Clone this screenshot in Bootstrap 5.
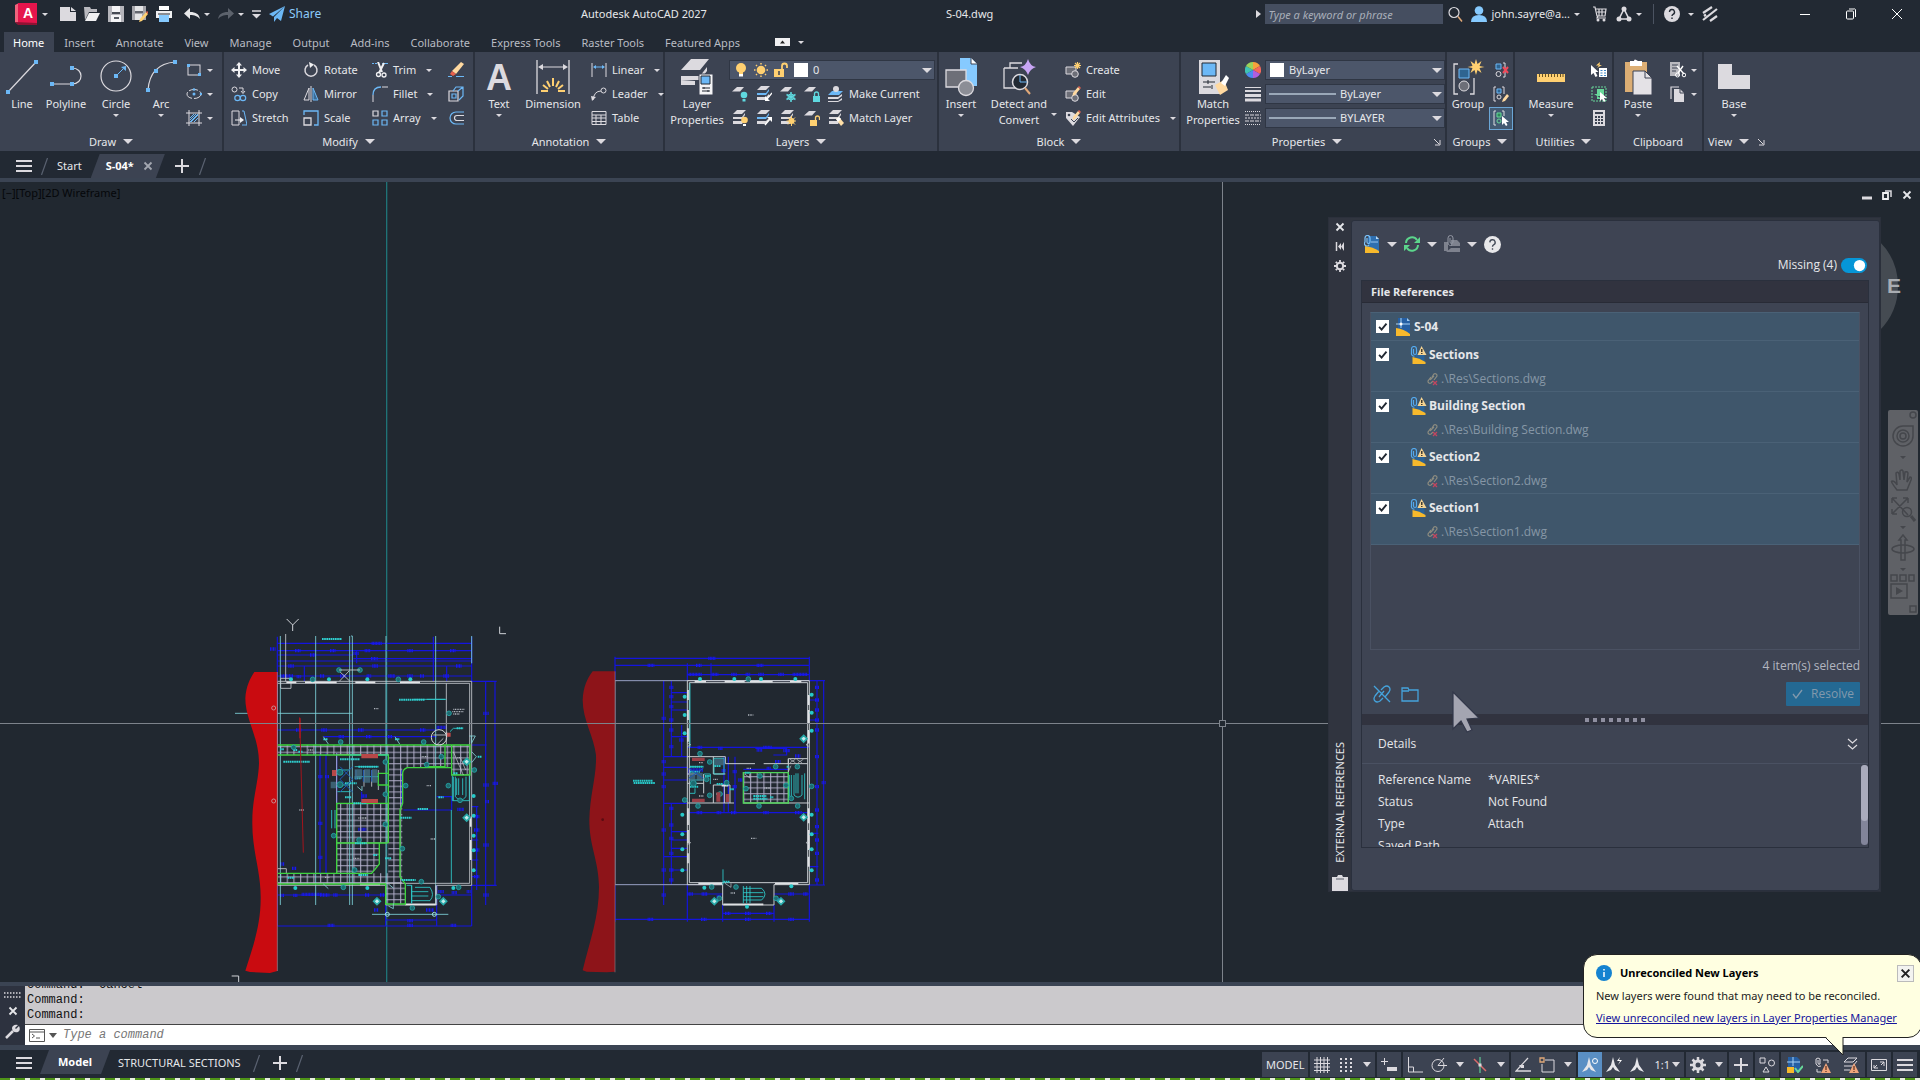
<!DOCTYPE html>
<html lang="en">
<head>
<meta charset="utf-8">
<meta name="viewport" content="width=device-width, initial-scale=1">
<title>Autodesk AutoCAD 2027 - S-04.dwg</title>
<link href="https://cdn.jsdelivr.net/npm/bootstrap@5.3.0/dist/css/bootstrap.min.css" rel="stylesheet">
<style>
:root{--dark:#222933;--panel:#3c4352;--edge:#2b313d;--field:#4c566a;--lite:#dcdadf;--blue:#6cb8f6;--gold:#ffd071;--teal:#5fd9e0}
body{font-family:"Noto Sans","Open Sans",sans-serif;font-size:11px;line-height:16px;color:#e6e7ea;background:var(--dark)}
button{background:none;border:0;padding:0;color:inherit;font:inherit;white-space:nowrap}
select,input{font:inherit;color:inherit}
svg{display:block;flex:none}
.i16{width:16px;height:16px}
.car,.bigcar{display:inline-block;flex:none;border:3px solid transparent;border-top-color:#dcdadf;border-bottom:0}
.bigcar{border-width:5px;border-bottom:0}
/* title bar */
.ttl{height:32px;padding:0 0 4px 13px;position:relative}
.quick{width:568px;gap:8px;flex:none}
.share{color:#8ccbfa;font-size:12px}
.prog{width:365px}
.srch{width:178px;height:20px;background:#454e60;border:0;border-radius:0;padding:0 3px;font-style:italic}
.srch::placeholder{color:#a9aeb9;opacity:1}
.winb{width:46px}
.wgap{width:56px}
/* ribbon */
.rtabs{height:20px;padding-left:4px}
.rtabs a{display:block;height:20px;padding:0 11px 0 10px;line-height:21px;color:#b9bcc3;text-decoration:none}
.rtabs a.active{background:var(--panel);color:#fff;padding:0 10px 0 9px}
.ribbon{background:var(--panel);height:99px}
.rpan{border-right:2px solid var(--edge);display:flex;flex-direction:column;flex:none}
.rbody{height:80px;padding-top:6px;display:flex}
.rfoot{height:19px;line-height:19px;display:flex;align-items:center;justify-content:center;gap:7px}
.rbig{display:flex;flex-direction:column;align-items:center;text-align:center;flex:none}
.rbig .pic{height:38px;display:flex;align-items:center}
.rbig .pic svg{overflow:visible}
.rbig .car{margin-top:2px}
.rgrid{display:grid;grid-auto-rows:24px;align-items:center;justify-items:start}
.rgrid button{display:flex;align-items:center;gap:5px;height:24px}
.rgrid .car{margin-left:5px}
.p-draw{width:224px}.p-mod{width:251px}.p-ann{width:190px}.p-lay{width:274px}.p-blk{width:242px}.p-prop{width:266px}.p-grp{width:68px}.p-utl{width:99px}.p-clip{width:90px}
.c-mod{grid-template-columns:72px 69px 76px 20px;padding-left:7px}
.c-lay{grid-template-columns:24px 24px 24px 24px 100px;padding-left:3px}
.c-prop{grid-template-columns:20px 180px}
.w42{width:42px}.w44{width:44px}.w48{width:48px}.w60{width:60px}.w64{width:64px}.w72{width:72px}
.fld{height:20px;background:var(--field);border:1px solid #2f3644;display:flex;align-items:center;margin:2px 0;padding:0 2px 0 3px;gap:4px;width:100%}
.w206{width:206px}
.fld select{appearance:none;background:none;border:0;padding:0;flex:1;min-width:0;height:18px;line-height:16px;outline:0}
.fld .rule{width:67px;height:2px;background:#9aa8b8;flex:none}
.rgrid .gsel{width:24px;height:23px;justify-content:center;background:#435a72;border:1px solid #6ba6d6}
/* file and layout tabs */
.ftabs{height:27px;padding:3px 0 0 16px;gap:9px}
.tabsel{height:24px;background:var(--panel);color:#fff;font-weight:700;clip-path:polygon(9px 0,100% 0,calc(100% - 9px) 100%,0 100%);display:flex;align-items:center;gap:9px;padding:0 12px 0 15px}
.tabmodel{padding:0 18px}
.strip{height:4px;background:#3b4453}
.strip2{height:5px}
.slash{width:7px;height:17px;color:#596170}
/* drawing window */
.view{position:relative;flex:1;min-height:0;background:#212830;overflow:hidden}
.model{position:absolute;inset:0;width:100%;height:100%}
.vlabel{position:absolute;left:2px;top:3px;color:#05070a}
.vwin{position:absolute;right:8px;top:8px;gap:10px}
.navb{position:absolute;right:2px;top:228px;width:30px;height:205px;background:#5f6166;border-radius:2px}
/* reference palette */
.pal{position:absolute;right:39px;top:35px;width:553px;background:#30353f;border:1px solid #2b303b;font-family:"Open Sans","Noto Sans",sans-serif;font-size:12px}
.palside{width:22px;padding:4px 0 0;background:#30343f;display:flex;flex-direction:column;align-items:center}
.palmain{background:#3e4453;border:1px solid #2a303d;border-radius:3px;padding:14px 10px 42px 9px;flex:1;margin-top:2px;min-width:0}
.ptools,.ptools button{display:flex;align-items:center;gap:7px}
.ptools{padding-left:3px}
.frame{border:1px solid #2a303d;margin-top:7px}
.frhead{height:22px;background:#31333f;border-bottom:1px solid #282b36;line-height:21px;padding-left:9px;font-weight:700;font-size:11px}
.rlist{margin:9px 8px 0;height:338px;border:1px solid #4a5162;border-top:1px solid #4a6176}
.rrow{background:#3f566b;border-bottom:1px solid #4a6176;padding:0 5px}
.rrow label{height:27px;display:flex;align-items:center;gap:2px;font-weight:700}
.rrow .pth{height:23px;display:flex;align-items:center;padding:0 0 2px 50px;gap:3px;color:#8696a6}
.rrow input{appearance:none;width:13px;height:13px;margin:0 5px 0 0;border:1px solid #fff;border-radius:0;background:#fff url("data:image/svg+xml,%3Csvg xmlns='http://www.w3.org/2000/svg' viewBox='0 0 12 12'%3E%3Cpath d='M2.5 6.2l2.4 2.5 4.7-5.6' fill='none' stroke='%23222933' stroke-width='1.8'/%3E%3C/svg%3E") center/12px no-repeat}
.sub input{margin-right:19px}
.missw{gap:4px}
.form-switch.missw{padding:0 2px 0 0;min-height:0;margin:4px 0 0}
.form-switch .form-check-input.miss{width:26px;height:15px;margin:0;border:0}
.form-check-input.miss:checked{background-color:#0696d7}
.selcount{color:#b3b6c0}
.linkb{gap:10px;padding-left:11px}
.resolve{width:74px;height:24px;background:#246993;color:#8299ac;border-radius:1px}
.split{height:11px;background:#31333f;display:flex;justify-content:center;align-items:center;gap:4px}
.split i{width:4px;height:4px;background:#8f8fa0}
.dhead{height:39px;padding:0 10px 0 16px;border-bottom:1px solid #4a5162}
.det{height:83px;overflow:hidden;padding:5px 0 0 16px;position:relative}
.det dl{display:grid;grid-template-columns:110px 1fr;grid-auto-rows:22px;margin:0;line-height:22px}
.det dt{font-weight:400}.det dd{margin:0}
.bar{position:absolute;right:0;top:1px;width:7px;height:80px;border-radius:4px;background:#82859a}
.bar i{display:block;height:56px;border-radius:4px;background:#a9abbc}
.vert{writing-mode:vertical-rl;transform:rotate(180deg);font:11px/14px "Noto Sans",sans-serif}
.ptr{position:absolute;right:439px;top:509px}
/* command window */
.cmd{background:#2d323f;font-family:"Liberation Mono",monospace;font-size:12px}
.cside{width:25px;padding:6px 0 6px}
.hist{height:39px;background:#cbc9cc;color:#111;line-height:15px;padding:0 2px 1px;overflow:hidden;display:flex;flex-direction:column;justify-content:flex-end;border-bottom:1px solid #444}
.cline{height:20px;background:#fff;color:#444;padding-left:4px;gap:2px}
.cline input{flex:1;border:0;background:none;font-style:italic;padding:0 0 0 4px;outline:0}
.cline input::placeholder{color:#777;opacity:1}
/* status bar */
.foot{height:28px;position:relative}
.ltabs{padding-left:16px;height:26px;gap:8px}
.stat{gap:2px;padding:2px 3px 0 0}
.stat .bigcar{border-width:5px 4px 0}
.sg{height:25px;background:var(--panel);display:flex;align-items:center;gap:8px;padding:0 4px}
.sg.wide{gap:12px;padding:0 6px}
.sg button{display:flex;align-items:center;height:25px;gap:9px}
.sg .on{background:#5a8fc4;padding:0 4px;margin:0 -4px}
.sg .tight{gap:2px}
.dash{height:2px;background:repeating-linear-gradient(90deg,#4f9418 0 10px,#e8efe0 10px 15px)}
.tip{position:absolute;right:-2px;bottom:40px;width:339px;height:84px;background:#ffffe1;border:1px solid #222;border-radius:14px;color:#222;padding:8px 7px 0 12px;z-index:5}
.tip h2{font-size:11px;font-weight:700;line-height:20px;margin:0;color:#000;flex:1}
.tip p{margin:5px 0 6px;line-height:16px}
.tip a{color:#14149c}
.tipx{width:17px;height:17px;background:#f3f3f0;border:1px solid #bbb;display:flex;align-items:center;justify-content:center}
.tail{position:absolute;left:240px;top:81px}
.glyph{font-family:"Liberation Sans",sans-serif;font-weight:700}
</style>
<script src="https://cdn.jsdelivr.net/npm/bootstrap@5.3.0/dist/js/bootstrap.bundle.min.js"></script>
</head>
<body>
<svg width="0" height="0" class="position-absolute" aria-hidden="true">
<defs>
<symbol id="burger" viewBox="0 0 16 14"><path d="M0 2h16M0 7h16M0 12h16" stroke="#dcdadf" stroke-width="2"/></symbol>
<symbol id="plus" viewBox="0 0 16 16"><path d="M8 1v14M1 8h14" stroke="#dcdadf" stroke-width="2"/></symbol>
<symbol id="ex" viewBox="0 0 10 10"><path d="M1.500 1.500l7 7M8.500 1.500l-7 7" stroke="currentColor" stroke-width="1.800"/></symbol>
<symbol id="sl" viewBox="0 0 7 17"><path d="M6.500 0L.5 17" stroke="currentColor" stroke-width="1.200"/></symbol>
<symbol id="rect" viewBox="0 0 16 16"><rect x="2" y="3" width="12" height="10" fill="none" stroke="#dcdadf"/><path d="M1 2h3v3H1zM12 11h3v3h-3z" fill="#6cb8f6"/></symbol>
<symbol id="elli" viewBox="0 0 16 16"><ellipse cx="8" cy="8" rx="7" ry="4.500" fill="none" stroke="#dcdadf" stroke-dasharray="9 2"/><circle cx="8" cy="8" r="1.500" fill="#6cb8f6"/><circle cx="15" cy="8" r="1.300" fill="#6cb8f6"/><circle cx="8" cy="3.500" r="1.300" fill="#6cb8f6"/></symbol>
<symbol id="hatch" viewBox="0 0 16 16"><path d="M3 0v16M13 0v16M0 3h16M0 13h16" stroke="#dcdadf"/><path d="M4 8l4-4M4 12l8-8M8 12l4-4M5 12l7-7M4 10l6-6" stroke="#6cb8f6"/></symbol>
<symbol id="move" viewBox="0 0 16 16"><path d="M8 0l3 3.500H9V7h3.500V5L16 8l-3.500 3V9H9v3.500h2L8 16l-3-3.500h2V9H3.500v2L0 8l3.500-3v2H7V3.500H5z" fill="#f0f0f2"/></symbol>
<symbol id="rotate" viewBox="0 0 16 16"><path d="M5 3a6 6 0 1 0 6 0" fill="none" stroke="#dcdadf" stroke-width="1.500"/><path d="M6 0l5 2.500L7 6z" fill="#f0f0f2"/></symbol>
<symbol id="copy" viewBox="0 0 16 16"><circle cx="3.500" cy="3.500" r="2.500" fill="none" stroke="#dcdadf"/><circle cx="6.500" cy="12" r="2.700" fill="none" stroke="#6cb8f6" stroke-width="1.200"/><circle cx="12" cy="12" r="2.700" fill="none" stroke="#6cb8f6" stroke-width="1.200"/><path d="M8 2h4v4M10 5l2 2.500L14 5" fill="none" stroke="#dcdadf"/></symbol>
<symbol id="mirror" viewBox="0 0 16 16"><path d="M6 2v12H1zM8 0v16" fill="none" stroke="#dcdadf"/><path d="M10 2v12h5z" fill="#3b6a94" stroke="#6cb8f6"/></symbol>
<symbol id="stretch" viewBox="0 0 16 16"><path d="M1 1h7v14H1z" fill="none" stroke="#dcdadf"/><path d="M11 1h2l3 14h-5" fill="none" stroke="#6cb8f6"/><path d="M4 10h6" stroke="#f0f0f2"/><path d="M9 7l4 3-4 3z" fill="#f0f0f2"/></symbol>
<symbol id="scale" viewBox="0 0 16 16"><path d="M1 5V1h14v14h-4" fill="none" stroke="#6cb8f6" stroke-width="1.300"/><path d="M1 8h7v7H1z" fill="none" stroke="#dcdadf" stroke-width="1.300"/></symbol>
<symbol id="trim" viewBox="0 0 16 16"><path d="M0 1.500h7" stroke="#6cb8f6" stroke-dasharray="2 1"/><path d="M10 1.500h6" stroke="#6cb8f6"/><path d="M6 0l4 10M12 1L7 11" stroke="#f0f0f2" stroke-width="2"/><circle cx="6.500" cy="12.500" r="2" fill="none" stroke="#f0f0f2" stroke-width="1.300"/><circle cx="12" cy="13" r="2" fill="none" stroke="#f0f0f2" stroke-width="1.300"/></symbol>
<symbol id="fillet" viewBox="0 0 16 16"><path d="M1 16V9" stroke="#dcdadf"/><path d="M1 9q0-8 8-8" fill="none" stroke="#6cb8f6" stroke-width="1.300"/><path d="M10 1h6" stroke="#dcdadf"/></symbol>
<symbol id="array" viewBox="0 0 16 16"><path d="M1 1h5v5H1z" fill="none" stroke="#dcdadf" stroke-width="1.200"/><path d="M10 1h5v5h-5zM1 10h5v5H1zM10 10h5v5h-5z" fill="none" stroke="#6cb8f6" stroke-width="1.200"/></symbol>
<symbol id="erase" viewBox="0 0 16 16"><path d="M13 0l3 2-8 10-4-3z" fill="#ffd9a0"/><path d="M4 9l4 3-3 2-3-2z" fill="#e8604c"/><path d="M0 14.500h4M8 14.500h8" stroke="#6cb8f6"/></symbol>
<symbol id="cube" viewBox="0 0 16 16"><path d="M1 5h9v10H1z" fill="none" stroke="#dcdadf" stroke-width="1.200"/><path d="M5 5l3-4h7v9l-4 4M10 5l5-4M4 8h4v4H4z" fill="none" stroke="#6cb8f6" stroke-width="1.200"/></symbol>
<symbol id="offset" viewBox="0 0 16 16"><path d="M16 2H8a6 6 0 0 0 0 12h8" fill="none" stroke="#6cb8f6" stroke-width="1.200"/><path d="M16 5.500H9a2.500 2.500 0 0 0 0 5h7" fill="none" stroke="#dcdadf" stroke-width="1.200"/></symbol>
<symbol id="lin" viewBox="0 0 16 16"><path d="M1 1v14M15 1v14" stroke="#dcdadf"/><path d="M3 5h10" stroke="#6cb8f6"/><path d="M2 5l3-2v4zM14 5l-3-2v4z" fill="#6cb8f6"/></symbol>
<symbol id="leader" viewBox="0 0 16 16"><path d="M2 14q1-9 8-9" fill="none" stroke="#dcdadf"/><circle cx="12.500" cy="4.500" r="2.500" fill="none" stroke="#dcdadf"/><path d="M0 10l5 1-4 4z" fill="#dcdadf"/></symbol>
<symbol id="table" viewBox="0 0 16 16"><path d="M1 1.500h14v13H1zM1 5h14M1 8h14M1 11.500h14M5 5v9M10 5v9" fill="none" stroke="#dcdadf"/></symbol>
<symbol id="bulb" viewBox="0 0 16 16"><circle cx="8" cy="6" r="5" fill="#ffd071"/><path d="M6 10h4v2H6z" fill="#ffd071"/><path d="M6 12h4v2.500H6z" fill="#fff"/></symbol>
<symbol id="sun" viewBox="0 0 16 16"><circle cx="8" cy="8" r="4.300" fill="#ffd071"/><path d="M8 1v1.500M8 13.500V15M1 8h1.500M13.500 8H15M3 3l1 1M12 12l1 1M13 3l-1 1M3 13l1-1" stroke="#ffd071" stroke-width="1.500"/></symbol>
<symbol id="unlock" viewBox="0 0 16 16"><path d="M1 7h10v8H1z" fill="#ffd071"/><path d="M9 8V4a2.500 2.500 0 0 1 5 0v2" fill="none" stroke="#ffd071" stroke-width="1.800"/><path d="M6 9v4" stroke="#3c4352" stroke-width="1.500"/></symbol>
<symbol id="sheet" viewBox="0 0 16 16"><path d="M5 1h7L8 5.500H0z" fill="#dcdadf"/></symbol>
<symbol id="sheets" viewBox="0 0 16 16"><path d="M5 0h9l-4 4H1z" fill="#dcdadf"/><path d="M1 7h9l3-4v2l-3 4H1zM1 11h9l3-3v2l-3 4H1z" fill="#dcdadf"/></symbol>
<symbol id="bsheets" viewBox="0 0 16 16"><path d="M5 0h9l-4 4H1z" fill="#dcdadf"/><path d="M1 7h9l3-4v2l-3 4H1z" fill="#6cb8f6"/><path d="M1 11h9l3-3v2l-3 4H1z" fill="#dcdadf"/></symbol>
<symbol id="l1" viewBox="0 0 16 16"><use href="#sheet"/><circle cx="12" cy="9" r="3.300" fill="#5fd9e0"/><path d="M10.500 13h3v2.500h-3z" fill="#5fd9e0"/></symbol>
<symbol id="l2" viewBox="0 0 16 16"><use href="#bsheets"/><path d="M16 7l-5 6" stroke="#fff" stroke-width="1.300"/><path d="M9 10v5h5z" fill="#fff"/></symbol>
<symbol id="l3" viewBox="0 0 16 16"><use href="#sheet"/><path d="M11 6v10M6.500 8.500l9 5M15.500 8.500l-9 5" stroke="#5fd9e0" stroke-width="1.500"/><circle cx="11" cy="11" r="3" fill="none" stroke="#5fd9e0"/></symbol>
<symbol id="l4" viewBox="0 0 16 16"><use href="#sheet"/><path d="M9 10h7v6H9z" fill="#5fd9e0"/><path d="M10.500 10V8a2 2 0 0 1 4 0v2" fill="none" stroke="#5fd9e0" stroke-width="1.300"/></symbol>
<symbol id="l5" viewBox="0 0 16 16"><path d="M4 5h11l-4 4H0z" fill="#6cb8f6"/><path d="M0 11h10l4-3v2l-4 3H0zM0 15h10l4-3v2l-4 2H0z" fill="#dcdadf"/><circle cx="8" cy="3" r="3" fill="#dcdadf"/></symbol>
<symbol id="m1" viewBox="0 0 16 16"><use href="#sheets"/><circle cx="12.500" cy="10" r="3.300" fill="#ffd071"/><path d="M11 14h3v2h-3z" fill="#fff"/></symbol>
<symbol id="m2" viewBox="0 0 16 16"><use href="#bsheets"/><path d="M9 15l5-6" stroke="#fff" stroke-width="1.300"/><path d="M11 7h5v5z" fill="#fff"/></symbol>
<symbol id="m3" viewBox="0 0 16 16"><use href="#sheets"/><circle cx="11.500" cy="11" r="3" fill="#ffd071"/><path d="M11.500 6v10M6.500 11h10M8 7.500l7 7M15 7.500l-7 7" stroke="#ffd071"/></symbol>
<symbol id="m4" viewBox="0 0 16 16"><use href="#sheet"/><path d="M6 10h7v6H6z" fill="#ffd071"/><path d="M11.500 10V8a2 2 0 0 1 4 0v2" fill="none" stroke="#ffd071" stroke-width="1.300"/></symbol>
<symbol id="m5" viewBox="0 0 16 16"><use href="#sheets"/><path d="M8 9l3-2 5 6-3 3z" fill="#ffe0a8"/><path d="M8 9l3-2 2 2-3 3z" fill="#fff"/></symbol>
<symbol id="blk" viewBox="0 0 16 16"><path d="M1 5h10v7H1z" fill="#6d6f78" stroke="#dcdadf"/><circle cx="10" cy="12" r="3.300" fill="#6d6f78" stroke="#dcdadf"/></symbol>
<symbol id="b1" viewBox="0 0 16 16"><use href="#blk"/><path d="M12.500 0v7M9 3.500h7M10 1l5 5M15 1l-5 5" stroke="#ffd071" stroke-width="1.200"/></symbol>
<symbol id="b2" viewBox="0 0 16 16"><use href="#blk"/><path d="M13 1l2 2-5 6-2.500 1 .5-3z" fill="#ffd9a0"/><path d="M13 1l1-1 2 2-1 1z" fill="#e8604c"/></symbol>
<symbol id="b3" viewBox="0 0 16 16"><path d="M1 2h6l8 5-7 9-7-8z" fill="#dcdadf"/><circle cx="4" cy="5" r="1.300" fill="#3c4352"/><path d="M6 9l3 3 4-4" stroke="#3c4352" fill="none"/><path d="M13 1l2 2-5 6-2.500 1 .5-3z" fill="#ffd9a0"/><path d="M13 1l1-1 2 2-1 1z" fill="#e8604c"/></symbol>
<symbol id="wheel" viewBox="0 0 16 16"><path d="M8 8V0a8 8 0 0 1 7 4z" fill="#f7a13c"/><path d="M8 8l7-4a8 8 0 0 1 0 8z" fill="#f2685c"/><path d="M8 8l7 4a8 8 0 0 1-7 4z" fill="#b05ee0"/><path d="M8 8v8a8 8 0 0 1-7-4z" fill="#4b8bf0"/><path d="M8 8l-7 4a8 8 0 0 1 0-8z" fill="#3fc3b4"/><path d="M8 8L1 4a8 8 0 0 1 7-4z" fill="#9bd35a"/></symbol>
<symbol id="lw" viewBox="0 0 16 16"><path d="M0 1.500h16" stroke="#dcdadf"/><path d="M0 5h16" stroke="#dcdadf" stroke-width="2"/><path d="M0 9.500h16M0 14h16" stroke="#dcdadf" stroke-width="3"/></symbol>
<symbol id="lt" viewBox="0 0 16 16"><path d="M0 1.500h16M0 14.500h16" stroke="#dcdadf" stroke-dasharray="1 1"/><path d="M0 5h16M0 11h16" stroke="#dcdadf" stroke-dasharray="4 1"/><path d="M0 8h16" stroke="#dcdadf" stroke-dasharray="2 1"/></symbol>
<symbol id="arrow" viewBox="0 0 16 16"><path d="M9 6v9l2-2 2 3 1.500-1-1.500-3h3z" fill="#fff"/></symbol>
<symbol id="g1" viewBox="0 0 16 16"><path d="M3 2h5v5H3z" fill="#2f6490" stroke="#6cb8f6"/><circle cx="5.500" cy="12" r="2.500" fill="none" stroke="#dcdadf"/><path d="M10 1h2v14h-2" fill="none" stroke="#dcdadf"/><path d="M10 5l5 6M15 5l-5 6" stroke="#f04a5a" stroke-width="2"/></symbol>
<symbol id="g2" viewBox="0 0 16 16"><path d="M3 1H1v14h2M9 1h2v7" fill="none" stroke="#dcdadf"/><path d="M4 3h4v4H4z" fill="#2f6490" stroke="#6cb8f6"/><circle cx="6" cy="11" r="2" fill="none" stroke="#dcdadf"/><path d="M14 8l2 2-4 5-3 1 1-3z" fill="#ffd9a0"/></symbol>
<symbol id="g3" viewBox="0 0 16 16"><path d="M3 1H1v14h2M9 1h2v5" fill="none" stroke="#dcdadf"/><path d="M4 3h4v4H4z" fill="#2d8a5a" stroke="#68d89a"/><circle cx="6" cy="11" r="2" fill="none" stroke="#68d89a"/><use href="#arrow"/></symbol>
<symbol id="u1" viewBox="0 0 16 16"><path d="M8 6h8v9H8z" fill="#fff"/><path d="M9.500 8.500h2M9.500 11h2M9.500 13.500h2M13 8.500h2M13 11h2M13 13.500h2" stroke="#3d87c7"/><path d="M0 3v10l2.500-2 2 4 2-1-2-4h3z" fill="#fff"/><path d="M9 0L5 3.500h3L6 6l5-3H8.500z" fill="#ffd071"/></symbol>
<symbol id="u2" viewBox="0 0 16 16"><path d="M1 1h14v14H1z" fill="none" stroke="#68d89a" stroke-dasharray="2 1"/><path d="M6 3h7v7H6zM3 8h3v5h5" fill="#68d89a"/><use href="#arrow"/></symbol>
<symbol id="u3" viewBox="0 0 16 16"><path d="M2 0h12v16H2z" fill="#dcdadf"/><path d="M4 2h8v2H4zM4 6h2v2H4zM7 6h2v2H7zM10 6h2v2h-2zM4 9h2v2H4zM7 9h2v2H7zM10 9h2v2h-2zM4 12h2v2H4zM7 12h2v2H7zM10 12h2v2h-2z" fill="#3c4352"/></symbol>
<symbol id="c1" viewBox="0 0 16 16"><path d="M0 0h10v14H0z" fill="#b9b9bf"/><path d="M2 3h6M2 6h6M2 9h4" stroke="#3c4352"/><path d="M7 4l7 8M13 4l-5 7" stroke="#fff" stroke-width="1.400"/><circle cx="7.500" cy="13" r="2" fill="none" stroke="#fff"/><circle cx="14" cy="13" r="1.800" fill="none" stroke="#fff"/></symbol>
<symbol id="c2" viewBox="0 0 16 16"><path d="M1 13V1h8" fill="none" stroke="#dcdadf" stroke-width="1.200"/><path d="M4 3h6l4 4v9H4z" fill="#dcdadf"/><path d="M10 3v4h4" fill="none" stroke="#3c4352"/></symbol>
<symbol id="launch" viewBox="0 0 8 8"><path d="M1 1l5 5M7 2v5H2" fill="none" stroke="#dcdadf"/></symbol>
<symbol id="dwg" viewBox="0 0 16 18"><path d="M2 0h9l3 3v12H2z" fill="#255fa4"/><path d="M11 0v3h3" fill="#9cc7ef"/><path d="M0 18V10q8 1 14 6v2z" fill="#f7b92c"/><path d="M5 0v10M0 6h14" stroke="#a8d2f5"/><circle cx="5" cy="6" r="1.500" fill="#fff"/></symbol>
<symbol id="xref" viewBox="0 0 16 18"><path d="M5 8h9v8H5z" fill="#2b6398"/><path d="M2 18V11q7 1 13 5v2z" fill="#f7b92c"/><path d="M1 3a2 2 0 0 1 5 0v4a1.300 1.300 0 0 1-3 0V3M1 3v4a2.500 2.500 0 0 0 3 3" fill="none" stroke="#54a9ee" stroke-width="1.200"/><path d="M11 0l5 9H7z" fill="#f6d492"/><path d="M11.300 3v3M11.300 7v1" stroke="#222" stroke-width="1.300"/></symbol>
<symbol id="brk" viewBox="0 0 12 14"><path d="M6 5l2-3a2 2 0 0 1 3 2L8 8M5 5L2 9a2 2 0 0 0 3 2l2-2M4 8l4-4" fill="none" stroke="#8d8c80" stroke-width="1.200"/><path d="M7 9l4 4M11 9l-4 4" stroke="#c4465f" stroke-width="1.300"/></symbol>
<symbol id="anno" viewBox="0 0 16 16"><path d="M7 0l2 8 5 7-5-2-2-3-2 3-5 2 5-7z" fill="#e6e6ea"/></symbol>
<symbol id="warn" viewBox="0 0 16 16"><path d="M11 6l5 10H6z" fill="#f0a57c"/><path d="M11 9v4M11 14v1" stroke="#5a3020" stroke-width="1.200"/></symbol>
<pattern id="grid" width="20" height="17" patternUnits="userSpaceOnUse"><path d="M0 2h20M2 0v17" stroke="#b3b0cc" stroke-width="3" fill="none"/></pattern>
</defs>
</svg>

<div class="d-flex flex-column vh-100 overflow-hidden">
<header class="ttl d-flex align-items-center">
  <div class="quick d-flex align-items-center">
    <button class="d-flex align-items-center gap-1" aria-label="Application menu"><svg width="25" height="24" viewBox="0 0 25 24"><path d="M2 3l4-2v22l-4-3z" fill="#f0647d"/><path d="M5 1h19v20H5z" fill="#e5154c"/><path d="M2 20l3 3h19v-2z" fill="#8f1233"/><text x="15" y="16" text-anchor="middle" font-size="14" fill="#fff" class="glyph">A</text></svg><i class="car"></i></button>
    <button class="ms-1" aria-label="New"><svg class="i16" viewBox="0 0 16 16"><path d="M0 1h10v5h6v9H0zM11 1l5 4h-5z" fill="#dcdadf"/></svg></button>
    <button aria-label="Open"><svg class="i16" viewBox="0 0 16 16"><path d="M0 1h6l1 2h6v3H5L1 14z" fill="#b9b9bf"/><path d="M5 7h11l-4 8H1z" fill="#f0f0f2"/></svg></button>
    <button aria-label="Save"><svg class="i16" viewBox="0 0 16 16"><path d="M0 0h16v16H0z" fill="#b5b5bb"/><path d="M4 0h8v6H4zM3 9h10v7H3z" fill="#f4f4f6"/><path d="M4 7h8M6 12h5" stroke="#222933" stroke-width="1.500"/></svg></button>
    <button aria-label="Save As"><svg class="i16" viewBox="0 0 16 16"><path d="M0 0h14v14H0z" fill="#a5a5ab"/><path d="M3 0h8v5H3zM3 8h7v6H3z" fill="#e4e4e6"/><path d="M3 6h8" stroke="#222933"/><path d="M14 6l2 2-6 7-3 1 1-3z" fill="#ffd071"/><path d="M14 6l1-1 2 2-1 1z" fill="#e8604c"/></svg></button>
    <button aria-label="Plot"><svg class="i16" viewBox="0 0 16 16"><path d="M3 0h10v4H3z" fill="#fff"/><path d="M0 5h16v7H0z" fill="#f0f0f2"/><path d="M3 9h10v7H3z" fill="#86caff"/><path d="M2 8h12" stroke="#222933"/></svg></button>
    <button class="d-flex align-items-center gap-1 ms-1" aria-label="Undo"><svg class="i16" viewBox="0 0 16 16"><path d="M6 2v4c6 0 9 2 10 7-3-3-5-4-10-4v4L0 7.500z" fill="#e8e8ea"/></svg><i class="car"></i></button>
    <button class="d-flex align-items-center gap-1" aria-label="Redo"><svg class="i16" viewBox="0 0 16 16"><path d="M10 2v4C4 6 1 8 0 13c3-3 5-4 10-4v4l6-5.500z" fill="#5c626c"/></svg><i class="car"></i></button>
    <button aria-label="Customize"><svg width="9" height="9" viewBox="0 0 9 9"><path d="M0 1h9" stroke="#dcdadf" stroke-width="1.500"/><path d="M0 4h9L4.500 8.500z" fill="#dcdadf"/></svg></button>
    <button class="share d-flex align-items-center gap-1"><svg class="i16" viewBox="0 0 16 16"><path d="M16 0L0 8l4 2.500zM16 0L5 11v5l3-4 4 3z" fill="#6cb8f6"/></svg>Share</button>
  </div>
  <div class="prog">Autodesk AutoCAD 2027</div>
  <div>S-04.dwg</div>
  <div class="d-flex align-items-center ms-auto h-100">
    <svg width="5" height="8" viewBox="0 0 5 8" class="me-1"><path d="M0 0l5 4-5 4z" fill="#dcdadf"/></svg>
    <input class="srch" type="search" placeholder="Type a keyword or phrase" aria-label="Search">
    <button class="ms-1" aria-label="Find"><svg class="i16" viewBox="0 0 16 16"><circle cx="7" cy="6.500" r="5" fill="none" stroke="#dcdadf" stroke-width="1.200"/><path d="M11 10.500l4 5" stroke="#e0a878" stroke-width="1.500"/></svg></button>
    <button class="d-flex align-items-center gap-1 ms-2"><svg class="i16" viewBox="0 0 16 16"><circle cx="8" cy="4.500" r="4.300" fill="#86caff"/><path d="M0 16q0-7 8-7t8 7z" fill="#86caff"/></svg>john.sayre@a...<i class="car"></i></button>
    <button class="ms-2 ps-1" aria-label="Cart"><svg class="i16" viewBox="0 0 16 16"><path d="M1 1h2l2 9h8l1-7H4M5 6h9M6 10l-1 2h9M7 3v7M10 3v7" fill="none" stroke="#dcdadf" stroke-width="1.200"/><circle cx="6" cy="14" r="1.500" fill="#dcdadf"/><circle cx="12" cy="14" r="1.500" fill="#dcdadf"/></svg></button>
    <button class="ms-2 d-flex align-items-center gap-1" aria-label="Apps"><svg class="i16" viewBox="0 0 16 16"><path d="M8 3L3 13h10z" fill="none" stroke="#dcdadf" stroke-width="1.600"/><circle cx="8" cy="3" r="2.500" fill="#dcdadf"/><circle cx="3" cy="13" r="2.500" fill="#dcdadf"/><circle cx="13" cy="13" r="2.500" fill="#dcdadf"/></svg><i class="car"></i></button>
    <svg width="22" height="20"><path d="M11.500 0v20" stroke="#4b5361"/></svg>
    <button class="d-flex align-items-center gap-1" aria-label="Help"><svg class="i16" viewBox="0 0 16 16"><circle cx="8" cy="8" r="8" fill="#dcdadf"/><path d="M5.500 6a2.500 2.500 0 1 1 3.500 2.300q-1 .5-1 1.700M8 11.500v1.500" fill="none" stroke="#222933" stroke-width="1.400"/></svg><i class="car ms-1"></i></button>
    <button class="ms-2" aria-label="Feedback"><svg class="i16" viewBox="0 0 16 16"><path d="M1 7l9-6M1 14L15 3M8 15l7-5M2 10l2-1.500" stroke="#dcdadf" stroke-width="2.200"/></svg></button>
    <span class="wgap"></span>
    <button class="winb ms-2 d-flex justify-content-center" aria-label="Minimize"><svg width="10" height="10"><path d="M0 5.500h10" stroke="#fff"/></svg></button>
    <button class="winb d-flex justify-content-center" aria-label="Restore"><svg width="10" height="12" viewBox="0 0 10 12"><rect x=".5" y="3" width="7" height="8" rx="1" fill="none" stroke="#fff"/><path d="M3 1h5a1 1 0 0 1 1.500 1v7" fill="none" stroke="#fff"/></svg></button>
    <button class="winb d-flex justify-content-center" aria-label="Close"><svg width="10" height="10" viewBox="0 0 10 10"><path d="M0 0l10 10M10 0L0 10" stroke="#fff"/></svg></button>
  </div>
</header>
<nav class="rtabs d-flex align-items-center">
  <a href="#" class="active">Home</a><a href="#">Insert</a><a href="#">Annotate</a><a href="#">View</a><a href="#">Manage</a><a href="#">Output</a><a href="#">Add-ins</a><a href="#">Collaborate</a><a href="#">Express Tools</a><a href="#">Raster Tools</a><a href="#">Featured Apps</a>
  <button class="d-flex align-items-center gap-2 ms-4" aria-label="Minimize ribbon"><svg width="15" height="8" viewBox="0 0 15 8"><path d="M0 0h15v8H0z" fill="#f0f0f2"/><path d="M5 5.500h5L7.500 2.500z" fill="#222"/></svg><i class="car"></i></button>
</nav>

<div class="ribbon d-flex">
  <section class="rpan p-draw"><div class="rbody">
    <button class="rbig w44"><span class="pic"><svg width="34" height="38" viewBox="0 0 34 38"><path d="M3 34L31 4" stroke="#dcdadf" stroke-width="1.200"/><path d="M1 32h4v4H1zM29 2h4v4h-4z" fill="#6cb8f6"/></svg></span>Line</button>
    <button class="rbig w44"><span class="pic"><svg width="34" height="38" viewBox="0 0 34 38"><path d="M3 26h20c12 0 12-16 0-16" fill="none" stroke="#dcdadf" stroke-width="1.200"/><path d="M1 24h4v4H1zM21 24h4v4h-4zM21 8h4v4h-4z" fill="#6cb8f6"/></svg></span>Polyline</button>
    <button class="rbig w48 ms-1"><span class="pic"><svg width="34" height="38" viewBox="0 0 34 38"><circle cx="17" cy="18" r="15" fill="none" stroke="#dcdadf" stroke-width="1.200"/><path d="M17 18l7-7" stroke="#6cb8f6"/><path d="M15 16h4v4h-4zM27 8v5l-5-4z" fill="#6cb8f6"/></svg></span>Circle<i class="car"></i></button>
    <button class="rbig w42"><span class="pic"><svg width="34" height="38" viewBox="0 0 34 38"><path d="M4 32Q6 6 31 4" fill="none" stroke="#dcdadf" stroke-width="1.200"/><path d="M2 30h4v4H2zM10 11h4v4h-4zM29 2h4v4h-4z" fill="#6cb8f6"/></svg></span>Arc<i class="car"></i></button>
    <div class="rgrid ms-1"><button aria-label="Rectangle"><svg class="i16"><use href="#rect"/></svg><i class="car ms-0"></i></button><button aria-label="Ellipse"><svg class="i16"><use href="#elli"/></svg><i class="car ms-0"></i></button><button aria-label="Hatch"><svg class="i16"><use href="#hatch"/></svg><i class="car ms-0"></i></button></div>
  </div><button class="rfoot">Draw <i class="bigcar"></i></button></section>

  <section class="rpan p-mod"><div class="rbody"><div class="rgrid c-mod">
    <button><svg class="i16"><use href="#move"/></svg>Move</button><button><svg class="i16"><use href="#rotate"/></svg>Rotate</button><button><svg class="i16"><use href="#trim"/></svg>Trim<i class="car"></i></button><button aria-label="Erase"><svg class="i16"><use href="#erase"/></svg></button>
    <button><svg class="i16"><use href="#copy"/></svg>Copy</button><button><svg class="i16"><use href="#mirror"/></svg>Mirror</button><button><svg class="i16"><use href="#fillet"/></svg>Fillet<i class="car"></i></button><button aria-label="Explode"><svg class="i16"><use href="#cube"/></svg></button>
    <button><svg class="i16"><use href="#stretch"/></svg>Stretch</button><button><svg class="i16"><use href="#scale"/></svg>Scale</button><button><svg class="i16"><use href="#array"/></svg>Array<i class="car"></i></button><button aria-label="Offset"><svg class="i16"><use href="#offset"/></svg></button>
  </div></div><button class="rfoot">Modify <i class="bigcar"></i></button></section>

  <section class="rpan p-ann"><div class="rbody">
    <button class="rbig w48"><span class="pic"><svg width="30" height="38" viewBox="0 0 30 38"><text x="15" y="32" text-anchor="middle" font-size="36" fill="#dcdadf" class="glyph">A</text></svg></span>Text<i class="car"></i></button>
    <button class="rbig w60"><span class="pic"><svg width="34" height="38" viewBox="0 0 34 38"><path d="M1 2v34M33 2v34" stroke="#dcdadf" stroke-width="1.300"/><path d="M4 9h26" stroke="#dcdadf"/><path d="M2 9l5-3v6zM32 9l-5-3v6z" fill="#dcdadf"/><path d="M17 20v8M11 23l3 6M23 23l-3 6M5 33h7M22 33h7M7 27l5 4M27 27l-5 4" stroke="#ffd071" stroke-width="2"/></svg></span>Dimension</button>
    <div class="rgrid ms-2"><button><svg class="i16"><use href="#lin"/></svg>Linear<i class="car"></i></button><button><svg class="i16"><use href="#leader"/></svg>Leader<i class="car"></i></button><button><svg class="i16"><use href="#table"/></svg>Table</button></div>
  </div><button class="rfoot">Annotation <i class="bigcar"></i></button></section>

  <section class="rpan p-lay"><div class="rbody">
    <button class="rbig w64"><span class="pic"><svg width="36" height="38" viewBox="0 0 36 38"><path d="M12 1h18l-9 11H2zM2 18h19l7-9v4l-7 9H2zM2 27h14v-4L2 22z" fill="#dcdadf"/><path d="M20 16h14v21H20z" fill="#f4f4f6" stroke="#3c4352"/><path d="M22 18h9v8h-9z" fill="#6cb8f6" stroke="#222933"/><path d="M23 30h8M23 33h8M25 29v2M29 32v2" stroke="#222933"/></svg></span>Layer<br>Properties</button>
    <div><div class="fld w206"><svg class="i16"><use href="#bulb"/></svg><svg class="i16"><use href="#sun"/></svg><svg class="i16"><use href="#unlock"/></svg><svg class="i16"><path d="M1 1h14v14H1z" fill="#fff"/></svg><select aria-label="Layer"><option>0</option></select><i class="bigcar"></i></div>
    <div class="rgrid c-lay">
      <button aria-label="Layer Off"><svg class="i16"><use href="#l1"/></svg></button><button aria-label="Isolate"><svg class="i16"><use href="#l2"/></svg></button><button aria-label="Freeze"><svg class="i16"><use href="#l3"/></svg></button><button aria-label="Lock"><svg class="i16"><use href="#l4"/></svg></button><button><svg class="i16"><use href="#l5"/></svg>Make Current</button>
      <button aria-label="Layers On"><svg class="i16"><use href="#m1"/></svg></button><button aria-label="Unisolate"><svg class="i16"><use href="#m2"/></svg></button><button aria-label="Thaw"><svg class="i16"><use href="#m3"/></svg></button><button aria-label="Unlock"><svg class="i16"><use href="#m4"/></svg></button><button><svg class="i16"><use href="#m5"/></svg>Match Layer</button>
    </div></div>
  </div><button class="rfoot">Layers <i class="bigcar"></i></button></section>

  <section class="rpan p-blk"><div class="rbody">
    <button class="rbig w44"><span class="pic"><svg width="34" height="38" viewBox="0 0 34 38"><path d="M16 0h11l6 6v22H16z" fill="#86caff"/><path d="M27 0v6h6" fill="#fff" stroke="#3c4352"/><path d="M2 12h20v17H2z" fill="#6d6f78" stroke="#dcdadf" stroke-width="1.300"/><circle cx="22" cy="30" r="7.500" fill="#8c8e96" stroke="#dcdadf" stroke-width="1.300"/></svg></span>Insert<i class="car"></i></button>
    <button class="rbig w64 ms-1"><span class="pic"><svg width="34" height="38" viewBox="0 0 34 38"><path d="M8 10V5h12M2 10h14M2 10v20h12" fill="none" stroke="#dcdadf" stroke-width="1.300"/><circle cx="18" cy="24" r="7.500" fill="#222933" stroke="#dcdadf" stroke-width="1.500"/><path d="M18 17v7h7" stroke="#6cb8f6" fill="none"/><path d="M23 30l5 6" stroke="#e0a878" stroke-width="2"/><path d="M26 1q2 7 8 8-6 2-8 8-2-6-8-8 6-1 8-8z" fill="#c8a5f5"/></svg></span><span>Detect and<br>Convert</span></button>
    <i class="car align-self-end mb-3"></i>
    <div class="rgrid ms-2"><button><svg class="i16"><use href="#b1"/></svg>Create</button><button><svg class="i16"><use href="#b2"/></svg>Edit</button><button><svg class="i16"><use href="#b3"/></svg>Edit Attributes<i class="car"></i></button></div>
  </div><button class="rfoot">Block <i class="bigcar"></i></button></section>

  <section class="rpan p-prop"><div class="rbody">
    <button class="rbig w64"><span class="pic"><svg width="34" height="38" viewBox="0 0 34 38"><path d="M3 2h21v34H3z" fill="#dcdadf"/><path d="M6 5h14v13H6z" fill="#6cb8f6" stroke="#222933"/><path d="M7 24h12M7 29h8M12 22v4M16 27v4" stroke="#222933"/><path d="M19 27l9-5 4 10-8 5z" fill="#ffd9a0"/><path d="M25 25l5-8 3 3-4 8z" fill="#fff"/></svg></span>Match<br>Properties</button>
    <div class="rgrid c-prop">
      <svg class="i16"><use href="#wheel"/></svg><div class="fld"><svg class="i16"><path d="M1 1h14v14H1z" fill="#fff"/></svg><select aria-label="Colour"><option>ByLayer</option></select><i class="bigcar"></i></div>
      <svg class="i16"><use href="#lw"/></svg><div class="fld"><i class="rule"></i><select aria-label="Lineweight"><option>ByLayer</option></select><i class="bigcar"></i></div>
      <svg class="i16"><use href="#lt"/></svg><div class="fld"><i class="rule"></i><select aria-label="Linetype"><option>BYLAYER</option></select><i class="bigcar"></i></div>
    </div>
  </div><div class="d-flex align-items-center"><button class="rfoot flex-grow-1">Properties <i class="bigcar"></i></button><button class="me-1" aria-label="Properties palette"><svg width="8" height="8"><use href="#launch"/></svg></button></div></section>

  <section class="rpan p-grp"><div class="rbody">
    <button class="rbig w42"><span class="pic"><svg width="34" height="38" viewBox="0 0 34 38"><path d="M7 6H3v30h4M19 36h4V20" fill="none" stroke="#dcdadf" stroke-width="1.300"/><path d="M8 11h10v9H8z" fill="#2f6490" stroke="#6cb8f6"/><circle cx="13" cy="28" r="5" fill="#6d6f78" stroke="#dcdadf"/><path d="M25 1l1.500 5 4-3-2 5 5 1-5 1 2 5-4-3L25 17l-1.500-5-4 3 2-5-5-1 5-1-2-5 4 3z" fill="#ffd071"/></svg></span>Group</button>
    <div class="rgrid"><button class="px-1" aria-label="Ungroup"><svg class="i16"><use href="#g1"/></svg></button><button class="px-1" aria-label="Group Edit"><svg class="i16"><use href="#g2"/></svg></button><button class="gsel" aria-label="Group Selection"><svg class="i16"><use href="#g3"/></svg></button></div>
  </div><button class="rfoot">Groups <i class="bigcar"></i></button></section>

  <section class="rpan p-utl"><div class="rbody">
    <button class="rbig w72"><span class="pic"><svg width="34" height="38" viewBox="0 0 34 38"><path d="M3 16h28v8H3z" fill="#ffd071"/><path d="M5.500 16v3M8.500 16v3M11.500 16v3M14.500 16v3M17.500 16v3M20.500 16v3M23.500 16v3M26.500 16v3M29 16v3" stroke="#6a5320"/></svg></span>Measure<i class="car"></i></button>
    <div class="rgrid"><button class="ps-1" aria-label="Quick Select"><svg class="i16"><use href="#u1"/></svg></button><button class="ps-1" aria-label="Select All"><svg class="i16"><use href="#u2"/></svg></button><button class="ps-1" aria-label="Calculator"><svg class="i16"><use href="#u3"/></svg></button></div>
  </div><button class="rfoot">Utilities <i class="bigcar"></i></button></section>

  <section class="rpan p-clip"><div class="rbody">
    <button class="rbig w48"><span class="pic"><svg width="34" height="38" viewBox="0 0 34 38"><path d="M4 4h22v30H4z" fill="#dcae74"/><path d="M9 5V3h4q0-3 4 0h4v5H9z" fill="#fff"/><path d="M12 13h12l7 7v17H12z" fill="#e4e2e6" stroke="#3c4352"/><path d="M24 13v7h7" fill="none" stroke="#3c4352"/></svg></span>Paste<i class="car"></i></button>
    <div class="rgrid ms-2"><button aria-label="Cut"><svg class="i16"><use href="#c1"/></svg><i class="car ms-0"></i></button><button aria-label="Copy Clip"><svg class="i16"><use href="#c2"/></svg><i class="car ms-0"></i></button></div>
  </div><div class="rfoot">Clipboard</div></section>

  <section class="d-flex flex-column px-1"><div class="rbody ps-1">
    <button class="rbig w44"><span class="pic"><svg width="34" height="38" viewBox="0 0 34 38"><path d="M1 6h14v11h18v14H1z" fill="#dcdadf"/></svg></span>Base<i class="car"></i></button>
  </div><div class="d-flex gap-2 align-items-center"><button class="rfoot">View <i class="bigcar"></i></button><button aria-label="View dialog"><svg width="8" height="8"><use href="#launch"/></svg></button></div></section>
</div>

<nav class="ftabs d-flex align-items-center">
  <button aria-label="File menu"><svg width="16" height="14"><use href="#burger"/></svg></button>
  <svg class="slash"><use href="#sl"/></svg>
  <button>Start</button>
  <div class="tabsel"><button class="fw-bold">S-04*</button><button aria-label="Close S-04"><svg width="10" height="10" color="#a3a7b0"><use href="#ex"/></svg></button></div>
  <button aria-label="New drawing"><svg class="i16"><use href="#plus"/></svg></button>
  <svg class="slash"><use href="#sl"/></svg>
</nav>
<div class="strip"></div>

<main class="view">
<svg class="model" aria-label="Floor plans">
 <g transform="translate(220 428) scale(.33333)" fill="none">
  <path d="M500 -1290V1700" stroke="#1f7377" stroke-width="4"/>
  <g stroke="#1414de" stroke-width="3.500">
   <path d="M172 100H755M172 122H755M172 135H400M400 146H755M172 153H755M172 168H755M172 198H755M172 360H650M310 380H650M172 855H497M650 855H755M497 930H650M172 948H755M172 80V405M797 214V885M825 214V825M755 214H830M755 405H800M755 826H830M755 80V214M755 826V948M650 826V948M497 885V948M172 826V948M300 430V790M318 430V790M770 590V840M755 590H775M755 690H775M755 750H775M755 800H775M253 168V214M680 168V214M350 430V580M650 560H695V600H550M172 370V400M157 214V380M155 560V820M640 80V214M410 120V160M425 545V575M545 480V590"/>
  </g>
  <path stroke="#1818f0" stroke-width="10" stroke-dasharray="3 1.500" d="M225 122h18M330 122h18M270 135h18M400 130h16M434 122h18M562 122h18M690 122h18M453 146h20M205 168h18M457 168h18M708 168h18M180 198h40M230 200h14M300 198h14M360 198h16M440 198h14M505 198h20M562 198h16M600 198h12M670 198h18M228 360h16M304 360h18M414 360h18M600 360h16M650 352h30M356 380h16M438 380h16M504 380h12M180 856h12M220 856h12M300 855h28M340 855h14M435 855h14M480 855h14M655 845h18M695 848h16M740 845h12M323 946h20M562 946h18M692 946h18M562 932h18M455 100h30M150 117h18M790 310h16M790 525h16M790 705h16M790 855h16M818 520h16M795 575h12M762 620h16M762 660h16M762 720h16M762 800h16M295 500h12M295 640h12M295 742h12M425 558h16M415 658h24M712 598h20M180 762h14M216 775h14M315 500h12M245 853h60M618 900h24M462 900h14"/>
  <path fill="url(#grid)" d="M172 405h333v30H172zM505 405h245v68H505zM505 473h42v349h-42zM350 580h155v120H350zM350 700h128v62l-22 28H350zM172 790h368v32H172zM497 822h58v60h-58zM695 473h55v22h-55z"/>
  <g stroke="#7fd6de" stroke-width="2.500"><path d="M181 78V885M287 78V885M389 78V885M397 78V885M498 78V885M647 78V885M755 78V160M45 310H397M456 913H685M393 78h4"/></g>
  <path stroke="#c9cdd2" stroke-width="2.500" d="M172 214H755V826H650V885H497V826H172zM172 220H749V820H172M197 72V214M182 205h31v30h-31zM679 220V405M350 430V790M647 826v59M172 776h27v14M350 433H505M432 480v50M455 480v50M475 480v60M354 180L390 214M388 182L358 214"/>
  <g stroke="#e2e4e6" stroke-width="5"><path d="M255 217H350M540 217h60M752 620v30M752 690v60M199 217h30M406 217h60M555 883H647M420 823h60"/></g>
  <path stroke="#3fd33f" stroke-width="4" d="M172 405H750V495H695V473H562Q548 478 548 490V580L540 600V800L556 822V882H497V822H172V790H350V580H505V435H172M350 699H503M478 700V762L455 790H350M505 580V699M695 405V473M675 405V470H620M505 490H475V525H505"/>
  <path stroke="#2fd0d0" stroke-width="2.500" d="M389 435H505M404 470H475M404 500H475M697 497V572H748V497M700 572V500M706 500V560Q722 580 738 560V500M575 826V880M585 832H630Q645 855 630 872H575M575 845h50M575 858h50M694 600V820M352 480H389M352 525H389M580 268H679M690 365l10-10h28M620 268H675M345 600V655M335 600V655M560 826h15v54M352 545h40M710 505v50M716 505v50M728 505v50"/>
  <path stroke="#2fd0d0" stroke-width="6" stroke-dasharray="5 1.500" d="M306 87h60M537 269h78M190 455h80M203 803h20M593 597h32M541 623h34M180 418h12M220 420h12M360 448h60M415 470h60M375 520h35M404 505h20M375 562h20M400 580h40M405 700h35M545 810h42M710 355h20M773 440h12M310 388h14M525 388h14M415 795h28M460 735h12M700 490h14M235 425h14M495 745h20M655 562h16"/>
  <g fill="#27c9c9"><circle cx="327" cy="208" r="6"/><circle cx="213" cy="208" r="6"/><circle cx="442" cy="208" r="6"/><circle cx="571" cy="208" r="6"/><circle cx="226" cy="834" r="6"/><circle cx="442" cy="834" r="6"/><circle cx="700" cy="834" r="6"/><circle cx="761" cy="558" r="6"/><circle cx="761" cy="617" r="6"/><circle cx="761" cy="677" r="6"/><circle cx="761" cy="721" r="6"/><circle cx="761" cy="781" r="6"/></g>
  <g stroke="#25a8a8" stroke-width="2.500" fill="#1f6a70"><circle cx="278" cy="208" r="7"/><circle cx="535" cy="208" r="7"/><circle cx="357" cy="180" r="7"/><circle cx="420" cy="180" r="7"/><circle cx="221" cy="412" r="7"/><circle cx="362" cy="396" r="7"/><circle cx="611" cy="396" r="7"/><circle cx="687" cy="310" r="7"/><circle cx="664" cy="440" r="7"/><circle cx="620" cy="464" r="7"/><circle cx="557" cy="527" r="7"/><circle cx="685" cy="527" r="7"/><circle cx="547" cy="716" r="7"/><circle cx="341" cy="677" r="7"/><circle cx="417" cy="690" r="7"/><circle cx="370" cy="832" r="7"/><circle cx="604" cy="815" r="7"/><circle cx="577" cy="894" r="7"/><circle cx="716" cy="832" r="7"/><circle cx="763" cy="480" r="7"/><circle cx="655" cy="860" r="7"/><circle cx="360" cy="487" r="9"/><circle cx="360" cy="524" r="9"/><circle cx="496" cy="456" r="7"/><circle cx="496" cy="553" r="7"/><circle cx="404" cy="780" r="7"/><circle cx="720" cy="571" r="7"/><circle cx="496" cy="643" r="7"/></g>
  <path d="M471 864l10 10-10 10-10-10zM670 864l10 10-10 10-10-10zM740 445l10 10-10 10-10-10zM740 613l10 10-10 10-10-10z" fill="#c4ecec" stroke="#27a9a9" stroke-width="5"/>
  <path stroke="#86d6da" stroke-width="2.500" d="M748 378h18l-12 22v-22M755 425l14 15-14 18M310 380l15 22M525 380l14 22M310 822l15 14M505 888l15 8v-16M505 822l15 12M412 530l14 12v-14"/>
  <g stroke="#1e58b8" stroke-width="3"><path d="M360 470l38 38M398 470l-38 38M360 508l38 38M398 508l-38 38M408 480v30M430 480v35M455 480v35"/></g>
  <path fill="#48788f" opacity=".7" d="M404 478h22v28h-22zM432 478h18v40h-18zM456 478h16v40h-16zM332 515h16v20h-16z"/>
  <path fill="#b84848" d="M424 432h50v13h-50zM424 567h50v12h-50zM336 480h13v18h-13zM680 368h12v12h-12z"/>
  <path stroke="#b0b6be" stroke-width="4" stroke-dasharray="3 2" d="M462 296h14M238 600h14M620 527h14M632 687h14M415 624h26M400 745h22M605 440h18M700 298h34M697 305h34M700 312h20M712 443h12M265 420h14M315 802h14"/>
  <path d="M103 186H172V1083L150 1089L90 1086L76 1082C95 1020 123 950 122 860C122 780 95 720 97 630C98 560 115 520 117 460C117 380 76 330 76 265C78 230 90 205 103 186z" fill="#c90b10"/>
  <path d="M172 186V1083" stroke="#9b8b96" stroke-width="2"/>
  <path d="M239 322L250 728" stroke="#a3141c" stroke-width="3"/><path d="M240 325v60" stroke="#b0181f" stroke-width="4"/>
  <circle cx="657" cy="382" r="23" stroke="#d4d7da" stroke-width="3"/><path d="M357 180H420M640 375h40v-10M650 405l20-20" stroke="#c9cdd2" stroke-width="2.500"/>
  <circle cx="161" cy="294" r="6" stroke="#c9a0a4" stroke-width="2.500"/><circle cx="161" cy="573" r="6" stroke="#c9a0a4" stroke-width="2.500"/><circle cx="502" cy="913" r="6" stroke="#9fe3e6" stroke-width="3"/><circle cx="643" cy="913" r="6" stroke="#9fe3e6" stroke-width="3"/>
  <path stroke="#d0d3d8" stroke-width="3" d="M200 27l18 18 18-18M218 45v18M839 50v21h19M35 1098h21v18"/>
  <path d="M700 425l30 70M722 445l15 35" stroke="#d0d3d8" stroke-width="2"/>
 </g>
 <g transform="translate(570 458) scale(.33333)" fill="none">
  <path stroke="#1414de" stroke-width="3.500" d="M135 55H718M135 76H718M352 104H718M352 322H718M352 518H718M352 762H458M612 762H718M458 820H612M135 838H718M135 50V120M718 50V120M352 70V120M423 70V120M281 122V795M304 122V350M304 490V735M335 255V350M281 350H352M281 490H352M741 122V735M761 122V735M718 122H765M718 735H765M718 735V845M612 795V845M458 795V845M352 735V845M135 735V845M475 350V520M495 350V520M462 350V520M741 310V480M556 325H650V345H610M520 388H655M281 650H352M281 382H352M281 420H352M304 158H352M304 186H352M304 210H352M304 290H352M304 575H352M304 600H352M304 625H352M304 690H352M718 180H745M718 240H745M718 580H745M718 680H745"/>
  <path stroke="#1818f0" stroke-width="10" stroke-dasharray="3 1.500" d="M415 55h22M233 76h20M378 76h18M560 76h20M356 103h40M425 103h20M484 103h16M527 103h14M565 103h18M625 103h18M668 103h44M383 322h14M445 325h14M560 330h18M580 322h25M640 332h20M675 348h16M380 518h18M440 518h14M483 518h16M580 518h16M675 518h20M352 762h18M395 762h18M440 770h14M616 778h12M655 762h18M700 762h14M465 820h16M525 820h18M588 820h16M393 838h18M525 838h18M655 838h18M233 838h18M275 235h12M275 365h12M275 402h12M275 440h12M275 570h12M275 690h12M275 765h12M298 142h12M298 170h12M298 200h12M298 240h12M298 270h12M298 320h12M298 505h12M298 555h12M298 595h12M298 640h12M298 690h12M298 720h12M328 300h14M735 142h12M735 180h12M735 210h12M735 240h12M735 270h12M735 350h12M735 440h12M735 510h12M735 560h12M735 600h12M735 640h12M735 720h12M755 428h12M355 390h44M488 440h12M590 385h12M455 392h12M488 395h12M505 420h12M615 365h18M352 400h10"/>
  <path fill="url(#grid)" d="M520 398h135v91H520z"/>
  <path d="M135 122H718M135 734H458M135 122V734" stroke="#97a0c4" stroke-width="3"/>
  <path stroke="#c9cdd2" stroke-width="3" d="M352 122H718V734H612V795H458V734H352zM358 128H713V728H358zM352 350H466V371H555M581 371H655V356H713M655 356V490M352 489H492M430 350V402H466M401 402V460M430 435V489M463 435V489M430 435H480V489M352 430H401M520 489H718M352 402H380M655 371H712"/>
  <g stroke="#dfe1e4" stroke-width="5"><path d="M374 125h34M464 125h60M540 125h68M660 125h34M354 150v30M354 210v30M354 265v40M716 165v30M716 210v40M716 270v40M354 505v50M354 570v40M354 640v30M716 505v45M716 570v60M716 650v30M385 731h72M615 731h70M460 793h30M490 793h90M455 437h20"/></g>
  <path d="M520 398H655V489H520z" stroke="#4fd35a" stroke-width="4"/>
  <path stroke="#2fd0d0" stroke-width="2.500" d="M360 130V322M459 688V734M520 738V790M530 738V790M540 738V790M520 745H575Q595 762 575 780H520M520 758h60M520 770h60M658 405V470M664 405V478M672 405V465Q684 478 696 465V405M704 400V478M684 400V460M678 400V460M360 460h15v-15M432 355H462V402H432zM401 402h20v30M360 380H400M360 420H400"/>
  <path stroke="#27c9c9" stroke-width="6" stroke-dasharray="5 1.500" d="M189 422h60M191 429h64M360 380h40M360 395h30M550 468h40M550 476h42M600 472h10M433 378h20M405 408h16M440 432h20M525 398h16M460 725h20M360 440h25M480 448h12M438 462h20M650 380h8"/>
  <g fill="#27c9c9"><circle cx="390" cy="117" r="6"/><circle cx="493" cy="117" r="6"/><circle cx="573" cy="117" r="6"/><circle cx="676" cy="117" r="6"/><circle cx="344" cy="170" r="6"/><circle cx="344" cy="225" r="6"/><circle cx="344" cy="280" r="6"/><circle cx="725" cy="164" r="6"/><circle cx="725" cy="218" r="6"/><circle cx="725" cy="272" r="6"/><circle cx="337" cy="524" r="6"/><circle cx="337" cy="583" r="6"/><circle cx="337" cy="628" r="6"/><circle cx="337" cy="691" r="6"/><circle cx="725" cy="524" r="6"/><circle cx="725" cy="583" r="6"/><circle cx="725" cy="628" r="6"/><circle cx="725" cy="691" r="6"/><circle cx="403" cy="743" r="6"/><circle cx="664" cy="739" r="6"/><circle cx="531" cy="800" r="6"/></g>
  <g stroke="#25a8a8" stroke-width="2.500" fill="#1f6a70"><circle cx="535" cy="117" r="7"/><circle cx="390" cy="341" r="7"/><circle cx="419" cy="366" r="7"/><circle cx="410" cy="418" r="7"/><circle cx="419" cy="466" r="7"/><circle cx="450" cy="462" r="7"/><circle cx="384" cy="498" r="7"/><circle cx="567" cy="498" r="7"/><circle cx="683" cy="498" r="7"/><circle cx="617" cy="380" r="7"/><circle cx="682" cy="380" r="7"/><circle cx="570" cy="408" r="7"/><circle cx="528" cy="446" r="7"/><circle cx="648" cy="436" r="7"/><circle cx="664" cy="475" r="7"/><circle cx="725" cy="439" r="7"/><circle cx="344" cy="480" r="7"/><circle cx="425" cy="741" r="7"/><circle cx="498" cy="741" r="7"/><circle cx="470" cy="428" r="7"/><circle cx="370" cy="430" r="9"/><circle cx="448" cy="775" r="7"/><circle cx="618" cy="775" r="7"/></g>
  <path d="M701 286l10 10-10 10-10-10zM701 522l10 10-10 10-10-10zM433 774l10 10-10 10-10-10zM633 774l10 10-10 10-10-10z" fill="#c4ecec" stroke="#27a9a9" stroke-width="5"/>
  <path fill="#48788f" opacity=".7" d="M358 398h18v24h-18zM380 398h18v24h-18zM434 356h28v20h-28z"/>
  <path stroke="#1e58b8" stroke-width="3" d="M356 385l44 30M400 385l-44 30"/>
  <path fill="#9c4048" d="M366 353h38v10h-38zM366 476h38v10h-38zM439 457h12v28h-12zM467 462h10v24h-10z"/>
  <path stroke="#b0b6be" stroke-width="4" stroke-dasharray="3 2" d="M534 225h16M543 595h16M530 385h14M583 444h20M482 759h14M387 468h14M430 418h14M387 368h12"/>
  <path stroke="#c9cdd2" stroke-width="2" d="M660 358l16 10M676 358l-16 10M680 358l16 10M700 358l-16 10M525 402l14 12v-12M465 730l18 12v-12M655 395l8-18M352 308l10 6-10 6M718 308l-10 6 10 6M352 602l10 6-10 6M718 602l-10 6 10 6"/>
  <path d="M68 94H135V995L110 997L50 995L38 991C60 900 87 830 87 740C86 660 58 620 58 540C60 460 80 410 78 345C72 290 38 240 38 180C40 140 52 115 68 94z" fill="#8d1419"/>
  <path d="M135 94V997" stroke="#8d7780" stroke-width="2"/><circle cx="98" cy="539" r="4" fill="#5a0c12"/>
 </g>
 <path d="M0 541.500H1219M1226 541.500H3000M1222.500 0V538M1222.500 545V900" stroke="#7d838b"/><rect x="1219.500" y="538.500" width="6" height="6" fill="none" stroke="#7d838b"/>
</svg>
<div class="vlabel">[−][Top][2D Wireframe]</div>
<svg class="position-absolute end-0 top-0" width="148" height="180" viewBox="0 0 148 180"><circle cx="63" cy="104" r="54" fill="none" stroke="#454b52" stroke-width="18"/><text x="122" y="111" text-anchor="middle" font-size="21" fill="#a9adb2" class="glyph">E</text></svg>
<div class="vwin d-flex align-items-center">
  <button aria-label="Minimize drawing"><svg width="10" height="10"><path d="M0 8h10" stroke="#dcdadf" stroke-width="3"/></svg></button>
  <button aria-label="Restore drawing"><svg width="10" height="10" viewBox="0 0 10 10"><path d="M1 3h5v6H1z" fill="none" stroke="#f0f0f2" stroke-width="1.800"/><path d="M3 1h6v6" fill="none" stroke="#dcdadf" stroke-width="1.500"/></svg></button>
  <button aria-label="Close drawing"><svg width="10" height="10"><use href="#ex"/></svg></button>
</div>
<svg class="navb" viewBox="0 0 30 205"><g fill="none" stroke="#45474c" stroke-width="1.500"><circle cx="25" cy="5" r="3"/><path d="M15 16h10v10a10 10 0 1 1-10-10z"/><circle cx="15" cy="26" r="6"/><circle cx="15" cy="26" r="3"/><path d="M9 80q-7-9-5-9 3 0 5 4l-1-12q2-2 3 1l1 6V61q2-2 3 0l1 9 1-8q2-1 3 1l-1 9 3-5q2 0 1 3l-4 10z"/><path d="M4 88l16 17M20 88L4 104M4 88h5M4 88v5M20 88h-5M20 88v5M4 104h5M4 104v-5"/><circle cx="19" cy="102" r="4.500"/><path d="M23 106l4 5" stroke-width="3"/><ellipse cx="15" cy="139" rx="11" ry="4"/><path d="M13 150v-20h-2l4-5 4 5h-2v20z"/><path d="M3 165h6v6H3zM12 165h6v6h-6zM21 165h5v6h-5zM3 174h16v14H3z"/><path d="M22 196h6v6h-6z"/></g><path d="M12 46h6l-3 3zM12 116h6l-3 3zM12 158h6l-3 3zM8 177v8l7-4z" fill="#45474c"/></svg>

<aside class="pal d-flex" aria-label="External References">
  <div class="palside">
    <button aria-label="Close palette"><svg width="10" height="11"><use href="#ex" width="10" height="10"/></svg></button>
    <button class="mt-2" aria-label="Auto-hide"><svg width="10" height="11" viewBox="0 0 10 11"><path d="M1.500 1v9" stroke="#dcdadf" stroke-width="1.500"/><path d="M3 5.500L6 2v7zM9 1v9L6 5.500z" fill="#dcdadf"/></svg></button>
    <button class="mt-2" aria-label="Palette settings"><svg width="12" height="12" viewBox="0 0 12 12"><circle cx="6" cy="6" r="3.200" fill="none" stroke="#dcdadf" stroke-width="2"/><path d="M6 0v2M6 10v2M0 6h2M10 6h2M1.800 1.800l1.400 1.400M8.800 8.800l1.400 1.400M10.200 1.800L8.800 3.200M1.800 10.200l1.400-1.400" stroke="#dcdadf" stroke-width="1.800"/></svg></button>
    <span class="vert mt-auto mb-2">EXTERNAL REFERENCES</span>
    <svg width="18" height="16" viewBox="0 0 18 16" class="mt-1"><path d="M1 2h5l1-2h4l1 2h5v14H1z" fill="#dcdadf"/><path d="M5 4h8" stroke="#5a5e6a"/></svg>
  </div>
  <div class="palmain">
    <div class="ptools">
      <button aria-label="Attach"><svg width="16" height="18" viewBox="0 0 16 18"><path d="M4 1h8l3 3v12H4z" fill="#2f6fb0"/><path d="M12 1v3h3z" fill="#b9dcf8"/><path d="M1 18v-7q8 1 14 5v2z" fill="#f7b92c"/><path d="M1 3a2 2 0 0 1 5 0v4a1.300 1.300 0 0 1-3 0V3M1 3v4a2.500 2.500 0 0 0 4 3" fill="none" stroke="#7cc3fa" stroke-width="1.200"/><path d="M7 7h7" stroke="#9cc7ef"/></svg><i class="bigcar"></i></button>
      <button aria-label="Refresh"><svg width="16" height="16" viewBox="0 0 16 16"><path d="M2 7a6 6 0 0 1 11-3M14 9a6 6 0 0 1-11 3" fill="none" stroke="#5cd68c" stroke-width="2"/><path d="M16 1v6h-6zM0 15V9h6z" fill="#5cd68c"/></svg><i class="bigcar"></i></button>
      <button aria-label="Change path"><svg width="16" height="18" viewBox="0 0 16 18"><path d="M0 7h4v9H0zM7 5h6l3 3v3H7zM7 13h9v4H2l5-4z" fill="#7e828e"/><path d="M4 3a2 2 0 0 1 5 0v4a1.300 1.300 0 0 1-3 0V3M4 3v5a2.500 2.500 0 0 0 4 2" fill="none" stroke="#9297a3"/></svg><i class="bigcar"></i></button>
      <button aria-label="Palette help"><svg width="17" height="17" viewBox="0 0 16 16"><circle cx="8" cy="8" r="8" fill="#e8e8ea"/><path d="M5.500 6a2.500 2.500 0 1 1 3.500 2.300q-1 .5-1 1.700M8 11.500v1.500" fill="none" stroke="#444b58" stroke-width="1.300"/></svg></button>
    </div>
    <div class="form-check form-switch missw d-flex justify-content-end align-items-center"><label for="missing">Missing (4)</label><input class="form-check-input miss" type="checkbox" role="switch" id="missing" checked></div>
    <div class="frame">
      <div class="frhead">File References</div>
      <div class="rlist">
        <div class="rrow"><label><input type="checkbox" checked><svg width="16" height="18"><use href="#dwg"/></svg>S-04</label></div>
        <div class="rrow sub"><label><input type="checkbox" checked><svg width="17" height="18"><use href="#xref"/></svg>Sections</label><div class="pth"><svg width="12" height="14"><use href="#brk"/></svg>.\Res\Sections.dwg</div></div>
        <div class="rrow sub"><label><input type="checkbox" checked><svg width="17" height="18"><use href="#xref"/></svg>Building Section</label><div class="pth"><svg width="12" height="14"><use href="#brk"/></svg>.\Res\Building Section.dwg</div></div>
        <div class="rrow sub"><label><input type="checkbox" checked><svg width="17" height="18"><use href="#xref"/></svg>Section2</label><div class="pth"><svg width="12" height="14"><use href="#brk"/></svg>.\Res\Section2.dwg</div></div>
        <div class="rrow sub"><label><input type="checkbox" checked><svg width="17" height="18"><use href="#xref"/></svg>Section1</label><div class="pth"><svg width="12" height="14"><use href="#brk"/></svg>.\Res\Section1.dwg</div></div>
      </div>
      <div class="selcount text-end px-2 mt-2">4 item(s) selected</div>
      <div class="linkb d-flex align-items-center pe-2 my-2">
        <button aria-label="Detach"><svg width="18" height="18" viewBox="0 0 18 18"><path d="M1 1l16 16M8 5l3-3q3-2 5 0t0 5l-4 5M10 13l-3 3q-3 2-5 0t0-5l4-5M11 6l-5 6" fill="none" stroke="#45a3dc" stroke-width="1.300"/></svg></button>
        <button aria-label="Browse"><svg width="18" height="16" viewBox="0 0 18 16"><path d="M1 2h6l1 2h9v11H1zM1 5h7" fill="none" stroke="#45a3dc" stroke-width="1.300"/></svg></button>
        <button class="resolve ms-auto d-flex align-items-center justify-content-center gap-2" disabled><svg width="11" height="10" viewBox="0 0 11 10"><path d="M1 5l3 4 6-8" fill="none" stroke="#8299ac" stroke-width="1.300"/></svg>Resolve</button>
      </div>
      <div class="split"><i></i><i></i><i></i><i></i><i></i><i></i><i></i><i></i></div>
      <div class="dhead d-flex align-items-center">Details<button class="ms-auto" aria-label="Collapse details"><svg width="11" height="13" viewBox="0 0 11 13"><path d="M1 1l4.500 4L10 1M1 7l4.500 4L10 7" fill="none" stroke="#dcdadf" stroke-width="1.200"/></svg></button></div>
      <div class="det"><dl><dt>Reference Name</dt><dd>*VARIES*</dd><dt>Status</dt><dd>Not Found</dd><dt>Type</dt><dd>Attach</dd><dt>Saved Path</dt><dd></dd></dl><div class="bar"><i></i></div></div>
    </div>
  </div>
</aside>
<svg class="ptr" width="29" height="42" viewBox="0 0 29 42"><path d="M1 1v37l8-8 6 11 5-2-5-11 12-1z" fill="#a4a5b1" stroke="#33384a" stroke-width="1.200"/></svg>
</main>
<div class="strip"></div>

<section class="cmd d-flex">
  <div class="cside d-flex flex-column align-items-center justify-content-between"><svg width="18" height="6" viewBox="0 0 18 6"><path d="M0 1h18M0 5h18" stroke="#dcdadf" stroke-width="1.500" stroke-dasharray="1.500 1.500"/></svg><button aria-label="Close command line"><svg width="10" height="10"><use href="#ex"/></svg></button><button aria-label="Customize command line"><svg width="15" height="15" viewBox="0 0 15 15"><path d="M1 14l7-7" stroke="#dcdadf" stroke-width="2.500"/><path d="M13 1l-3 3 1 1 3-3q2 4-1 6-3 1-5-1-2-3 0-5 2-2 5-1z" fill="#dcdadf"/></svg></button></div>
  <div class="flex-grow-1"><div class="hist"><div>Command: *Cancel*</div><div>Command:</div><div>Command:</div></div>
  <div class="cline d-flex align-items-center"><button class="d-flex align-items-center gap-1" aria-label="Recent commands"><svg width="16" height="13" viewBox="0 0 16 13"><path d="M.5.500h15v12H.5zM.5 3h15M3 5l2.500 2L3 9M7 9h4" fill="none" stroke="#555"/></svg><svg width="8" height="5"><path d="M0 0h8L4 5z" fill="#555"/></svg></button><input type="text" placeholder="Type a command" aria-label="Command"></div></div>
</section>
<div class="strip strip2"></div>

<footer class="foot d-flex align-items-start flex-shrink-0">
  <div class="ltabs d-flex align-items-center">
    <button aria-label="Layout menu"><svg width="16" height="14"><use href="#burger"/></svg></button>
    <div class="tabsel tabmodel align-self-start"><button class="fw-bold">Model</button></div>
    <button>STRUCTURAL SECTIONS</button>
    <svg class="slash ms-1"><use href="#sl"/></svg>
    <button class="ms-1" aria-label="New layout"><svg class="i16"><use href="#plus"/></svg></button>
    <svg class="slash"><use href="#sl"/></svg>
  </div>
  <div class="stat d-flex ms-auto">
    <div class="sg"><button>MODEL</button></div>
    <div class="sg"><button aria-label="Grid"><svg class="i16" viewBox="0 0 16 16"><path d="M3 0v16M6.500 0v16M10 0v16M13.500 0v16M0 3h16M0 6.500h16M0 10h16M0 13.500h16" stroke="#dcdadf"/></svg></button><button aria-label="Snap"><svg class="i16" viewBox="0 0 16 16"><path d="M2 2h13M2 6h13M2 10h13M2 14h13" stroke="#dcdadf" stroke-width="2" stroke-dasharray="2 3"/></svg><i class="bigcar"></i></button></div>
    <div class="sg"><button aria-label="Dynamic input"><svg class="i16" viewBox="0 0 16 16"><path d="M3.500 1v7M0 4.500h7" stroke="#dcdadf"/><path d="M6 10h10v4H6z" fill="#dcdadf"/></svg></button></div>
    <div class="sg"><button aria-label="Ortho"><svg class="i16" viewBox="0 0 16 16"><path d="M1.500 0v15H16M1.500 10h5v5" fill="none" stroke="#dcdadf"/></svg></button><button aria-label="Polar"><svg class="i16" viewBox="0 0 16 16"><circle cx="7" cy="8.500" r="6" fill="none" stroke="#dcdadf"/><path d="M7 8.500h9M7 8.500L13 1" stroke="#dcdadf"/></svg><i class="bigcar"></i></button><button aria-label="Isometric"><svg class="i16" viewBox="0 0 16 16"><path d="M8 0v16" stroke="#58b08a" stroke-width="1.500"/><path d="M2 2l12 12" stroke="#d86a6a" stroke-width="1.500"/><path d="M6.500 6.500h3v3h-3z" fill="#dcdadf"/></svg><i class="bigcar"></i></button></div>
    <div class="sg"><button aria-label="Object tracking"><svg class="i16" viewBox="0 0 16 16"><path d="M13 1L1 14h15" fill="none" stroke="#dcdadf" stroke-width="1.300"/><path d="M4 8h5v3H6z" fill="#dcdadf"/></svg></button><button aria-label="Object snap"><svg class="i16" viewBox="0 0 16 16"><path d="M6 3h9v12H3V7" fill="none" stroke="#dcdadf"/><path d="M1 1h4v4H1z" fill="none" stroke="#e0a878" stroke-width="1.300"/></svg><i class="bigcar"></i></button></div>
    <div class="sg"><button class="on" aria-label="Annotation visibility"><svg class="i16" viewBox="0 0 16 16"><use href="#anno"/><circle cx="13" cy="4" r="2.500" fill="none" stroke="#fff"/></svg></button><button aria-label="AutoScale"><svg class="i16" viewBox="0 0 16 16"><use href="#anno"/><path d="M14 0l-3 4h3l-2 4 4-5h-3z" fill="#fff"/></svg></button><button aria-label="Annotation scale icon"><svg class="i16"><use href="#anno"/></svg></button><button class="tight">1:1<i class="bigcar"></i></button></div>
    <div class="sg"><button aria-label="Workspace"><svg class="i16" viewBox="0 0 16 16"><circle cx="8" cy="8" r="4" fill="none" stroke="#dcdadf" stroke-width="3"/><path d="M8 0v3M8 13v3M0 8h3M13 8h3M2.500 2.500l2 2M11.500 11.500l2 2M13.500 2.500l-2 2M2.500 13.500l2-2" stroke="#dcdadf" stroke-width="2.500"/></svg><i class="bigcar"></i></button></div>
    <div class="sg"><button aria-label="Annotation monitor"><svg class="i16"><use href="#plus"/></svg></button></div>
    <div class="sg"><button aria-label="Isolate objects"><svg class="i16" viewBox="0 0 16 16"><path d="M1 1h5v5H1zM7 15l-3-0 3-5 3 5z" fill="none" stroke="#dcdadf"/><circle cx="12.500" cy="6" r="3" fill="none" stroke="#dcdadf"/></svg></button></div>
    <div class="sg wide"><button aria-label="DWG status"><svg class="i16" viewBox="0 0 16 16"><path d="M1 0h9l3 3v12H1z" fill="#255fa4"/><path d="M0 10h7v6H0z" fill="#f7b92c"/><path d="M6 0v9M0 5h13" stroke="#a8d2f5"/><path d="M8 11l3 4 5-6" fill="none" stroke="#68d89a" stroke-width="2"/></svg></button><button aria-label="Xref status"><svg class="i16" viewBox="0 0 16 16"><path d="M1 2q2-2 4 0v5q-2 1-2-1V3M1 2v5q2 4 5 2M8 3h5v3M2 12v3h4" fill="none" stroke="#dcdadf"/><use href="#warn"/></svg></button><button aria-label="Unreconciled layers"><svg class="i16" viewBox="0 0 16 16"><path d="M5 1h9l-4 4H1zM1 9h9l4-5M1 13h6" fill="none" stroke="#dcdadf"/><use href="#warn"/></svg></button></div>
    <div class="sg"><button aria-label="Clean screen"><svg class="i16" viewBox="0 0 16 16"><path d="M.5 2.500h15v11H.5zM9 5h4v4M13 5l-3 3M7 11H3V8M3 11l3-3" fill="none" stroke="#dcdadf"/></svg></button></div>
    <div class="sg"><button aria-label="Customization"><svg class="i16"><use href="#burger"/></svg></button></div>
  </div>
  <div class="tip" role="alert">
    <div class="d-flex align-items-center gap-2"><svg width="16" height="16" viewBox="0 0 16 16"><circle cx="8" cy="8" r="8" fill="#1583d0"/><path d="M8 7v5M8 4v1.500" stroke="#fff" stroke-width="1.500"/></svg><h2>Unreconciled New Layers</h2><button class="tipx" aria-label="Close notification"><svg width="11" height="11" viewBox="0 0 10 10"><use href="#ex"/></svg></button></div>
    <p>New layers were found that may need to be reconciled.</p>
    <a href="#">View unreconciled new layers in Layer Properties Manager</a>
    <svg class="tail" width="22" height="22" viewBox="0 0 22 22"><path d="M1 0l18 19V0z" fill="#ffffe1"/><path d="M1 1l18 18V1" fill="none" stroke="#222"/></svg>
  </div>
</footer>
<div class="dash flex-shrink-0"></div>
</div>
</body>
</html>
